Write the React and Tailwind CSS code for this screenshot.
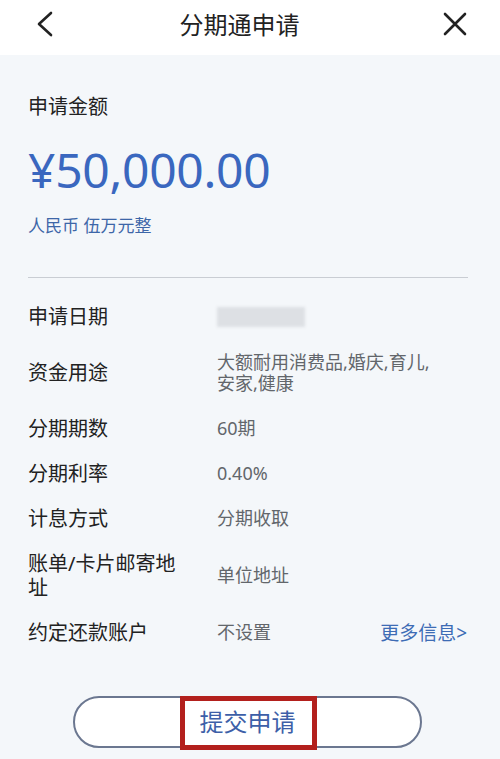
import React from "react";

const rows = [
  { label: "申请日期", value: null, h: "h-[45px]" },
  { label: "资金用途", value: "大额耐用消费品,婚庆,育儿,安家,健康", h: "h-[67px]" },
  { label: "分期期数", value: "60期", h: "h-[45px]" },
  { label: "分期利率", value: "0.40%", h: "h-[45px]" },
  { label: "计息方式", value: "分期收取", h: "h-[45px]" },
  { label: "账单/卡片邮寄地址", value: "单位地址", h: "h-[69px]" },
  { label: "约定还款账户", value: "不设置", h: "h-[45px]", more: true },
];

const font = { fontFamily: '"Noto Sans", "Noto Sans CJK SC", sans-serif' };

const App = () => {
  return (
    <div className="w-[500px] h-[759px] bg-[#f4f7fa] overflow-hidden" style={font}>
      <header className="h-[55px] bg-white flex items-center justify-between px-[36px] pb-[8px]">
        <svg width="18" height="26" viewBox="0 0 18 26" fill="none">
          <path d="M15 2 L3 13 L15 24" stroke="#222" strokeWidth="2.6" strokeLinecap="round" strokeLinejoin="round" />
        </svg>
        <h1 className="text-[24px] leading-[30px] text-[#222] mt-[2px] mr-[18px]">分期通申请</h1>
        <svg width="24" height="24" viewBox="0 0 24 24" fill="none" className="mr-[-3px]">
          <path d="M2 2 L22 22 M22 2 L2 22" stroke="#222" strokeWidth="2.6" strokeLinecap="round" />
        </svg>
      </header>

      <div className="px-[28px]">
        <div className="pt-[38px] text-[20px] leading-[28px] text-[#222]">申请金额</div>
        <div className="mt-[21px] text-[48px] leading-[56px] text-[#3a67bf] tracking-[-0.3px]">¥50,000.00</div>
        <div className="mt-[16px] text-[17px] leading-[24px] text-[#3d66a8]">人民币 伍万元整</div>
        <div className="mt-[39px] border-t border-[#c9cdd3] mr-[4px]"></div>

        <div className="mt-[16px]">
          {rows.map((r, i) => (
            <div key={i} className={`flex items-center ${r.h}`}>
              <div className="w-[160px] shrink-0 mr-[29px] text-[20px] leading-[24px] text-[#222]">{r.label}</div>
              <div className="flex-1 min-w-0">
                {r.value ? (
                  <div className="max-w-[222px] text-[18px] leading-[21px] text-[#62666b]">{r.value}</div>
                ) : (
                  <div className="w-[88px] h-[20px] bg-[#dde0e4] blur-[1.5px]"></div>
                )}
              </div>
              {r.more && (
                <div className="shrink-0 text-[19px] leading-[24px] text-[#3d6cb5] mr-[5px] whitespace-nowrap">更多信息&gt;</div>
              )}
            </div>
          ))}
        </div>

        <div className="mt-[41px] flex justify-center">
          <button className="relative w-[349px] h-[52px] rounded-full border-2 border-[#6b7790] bg-white text-[24px] text-[#3d5fa8] flex items-center justify-center ml-[-5px]">
            提交申请
            <span className="absolute left-[105px] -top-[2px] w-[137px] h-[54px] border-[5px] border-[#b3201d]"></span>
          </button>
        </div>
      </div>
    </div>
  );
};

export default App;
